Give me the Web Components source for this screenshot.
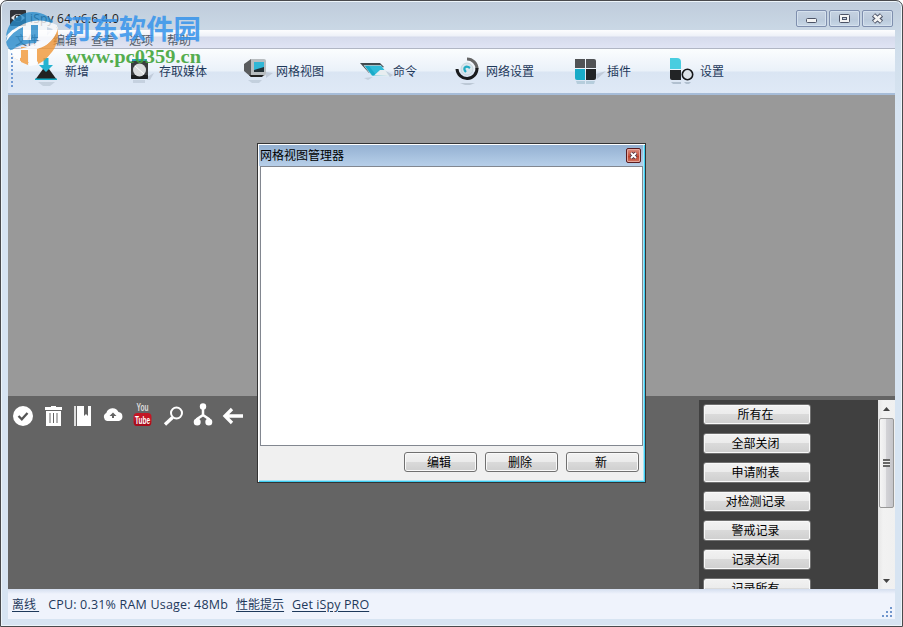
<!DOCTYPE html>
<html lang="zh-CN"><head><meta charset="utf-8"><title>iSpy 64 v6.6.4.0</title>
<style>html,body{margin:0;width:903px;height:627px;overflow:hidden;background:#fff;font:12px/16px "Noto Sans CJK SC",sans-serif}</style></head><body>
<ispy-window></ispy-window>
<script>
const icons={
add:'<path d="M8 25L16 14H22L30 25Z" fill="#222"/><path d="M8 23.500h22v1.600H8z" fill="#14a9c4"/><path d="M16.500 3h5v7h4.500l-7 7-7-7h4.500z" fill="#25b3d0"/><path d="M11 27h17l-5 4h-7z" fill="#8c9aa8" opacity=".3"/>',
media:'<path d="M26 22l7-4-4 7h-3z" fill="#9aa6b4" opacity=".4"/><rect x="11" y="4" width="15" height="6" fill="#28a5bd"/><rect x="10" y="6" width="17" height="18" rx="1.500" fill="#3a3c3e"/><rect x="10" y="20" width="17" height="4" rx="1" fill="#1b1d1f"/><circle cx="18.500" cy="15" r="6.500" fill="#dadcde"/><path d="M14 11l9 8" stroke="#fff"/><path d="M12 25h12v3H12z" fill="#8c9aa8" opacity=".28"/>',
grid:'<path d="M28 17l7 1-7 5z" fill="#9aa6b4" opacity=".4"/><path d="M6 9l7-5h6v18h-6l-7-6z" fill="#5a5c5e"/><path d="M13 4h13a2 2 0 012 2v12a3 3 0 01-3 3H13z" fill="#b8bdc0"/><path d="M11 20h15l-2 2H13z" fill="#222"/><path d="M16 7h10v10H16z" fill="#243137"/><path d="M16 7h10v5l-10 3z" fill="#30b7d6"/><path d="M10 25h14l-3 3h-7z" fill="#8c9aa8" opacity=".3"/>',
cmd:'<path d="M29 15l9 5-3 2z" fill="#9aa6b4" opacity=".4"/><path d="M5 8h20l4 4-15 6z" fill="#414a4e"/><path d="M9 10.500h17l8 10.500H17z" fill="#1aabc9" stroke="#e6f2f6" stroke-width=".6"/><path d="M14 11h12l4 5-9 4z" fill="#2fbbd8"/><path d="M19 20.500l6-5.500h5l4 6z" fill="#e7edf0"/><path d="M9 23l9-1-5 3z" fill="#8c9aa8" opacity=".3"/>',
net:'<path d="M19 4a10 10 0 0110 10" fill="none" stroke="#666" stroke-width="3"/><path d="M29 13a10 10 0 01-20 1" fill="none" stroke="#191b1d" stroke-width="3"/><circle cx="19" cy="14" r="6" fill="#d9e6ec" stroke="#c6d5dd"/><path d="M18 17c-4-4 0-7 4-4" fill="none" stroke="#24abc4" stroke-width="2.200"/><path d="M12 28h15l-5 2h-5z" fill="#8c9aa8" opacity=".4"/>',
plugin:'<path d="M27 19l10-3-9 8z" fill="#9aa6b4" opacity=".4"/><path d="M6 4h10v9H6z" fill="#515355"/><path d="M17 4h8a2 2 0 012 2v7H17z" fill="#515355"/><path d="M6 14h10v11H8a2 2 0 01-2-2z" fill="#19abc7"/><path d="M17 14h10v9a2 2 0 01-2 2h-8z" fill="#222426"/><path d="M7 26h9v3H8zM17 26h9l-1 3h-8z" fill="#6e9eb0" opacity=".35"/>',
settings:'<path d="M8 3h7a4 4 0 014 4v7H8z" fill="#48cde0"/><path d="M8 15h11v10H10a2 2 0 01-2-2z" fill="#222426"/><circle cx="25.500" cy="19.500" r="5.200" fill="#dce3e9" stroke="#151719" stroke-width="1.600"/><path d="M9 27h10v2h-8zM22 27h7l-2 2h-3z" fill="#718899" opacity=".4"/>',
check:'<circle cx="10" cy="10" r="10"/><path d="M5.500 10l3.300 3.300L14.500 7" fill="none" stroke="#555" stroke-width="2.300"/>',
trash:'<path d="M2 1h6V0h5v1h6v3H2z"/><path fill-rule="evenodd" d="M3 5h15v15H3zM6.500 7v10h1V7zm3.500 0v10h1V7zm3.500 0v10h1V7z"/>',
book:'<path d="M1 0h2v20H1z" fill="#ddd"/><path d="M4 0h7v10l2-2 2 2V0h3v20H4z"/>',
cloud:'<path fill-rule="evenodd" d="M4 15a4.300 4.300 0 01-.7-8A6.500 6.500 0 0115.500 6 4.600 4.600 0 0116 15zM10 6.500L6.500 10H9v2h2v-2h2.500z"/>',
find:'<circle cx="13.500" cy="7" r="5.500" fill="none" stroke="#fff" stroke-width="2"/><path d="M9.500 11.500l-7.500 7" stroke="#fff" stroke-width="3.300"/>',
tree:'<circle cx="10" cy="0.500" r="3.200"/><circle cx="4.200" cy="16" r="3.500"/><circle cx="15.800" cy="16" r="3.500"/><path d="M10 2v7L4.200 13v3M10 9l5.800 4v3" fill="none" stroke="#fff" stroke-width="2.500"/>',
back:'<path d="M20 10H3M9 3l-7 7 7 7" fill="none" stroke="#fff" stroke-width="3.300"/>',
tube:'<text x="9.500" y="5" text-anchor="middle" font-family="Liberation Sans" font-weight="bold" font-size="10.500" textLength="12" lengthAdjust="spacingAndGlyphs" fill="#ddd">You</text><rect x=".5" y="7" width="18" height="13" rx="4" fill="#c31725"/><rect x="1" y="14" width="17" height="6" rx="3" fill="#a80d1b"/><text x="9.500" y="17.500" text-anchor="middle" font-family="Liberation Sans" font-weight="bold" font-size="11" textLength="15" lengthAdjust="spacingAndGlyphs" fill="#fff">Tube</text>'};
const def=(n,html)=>customElements.define(n,class extends HTMLElement{constructor(){super();this.attachShadow({mode:'open'}).innerHTML=typeof html==='function'?html(this):html}});
def('ui-icon',e=>`<style>:host{display:block;flex:none;width:var(--icon-size,20px);height:var(--icon-size,20px)}svg{display:block;width:100%;height:100%;overflow:visible}</style><svg viewBox="0 0 ${e.getAttribute('size')||20} ${e.getAttribute('size')||20}" fill="#fff">${icons[e.getAttribute('name')]}</svg>`);
def('tool-item',e=>`<style>:host{display:flex;flex:none;align-items:center;gap:6px;color:#1e395b;white-space:nowrap;--icon-size:32px}</style><ui-icon size="32" name="${e.getAttribute('icon')}"></ui-icon><span><slot></slot></span>`);
def('ui-button',`<style>:host{display:flex;box-sizing:border-box;flex:none;align-items:center;justify-content:center;height:20px;border:1px solid #707070;border-radius:3px;background:linear-gradient(#f2f2f2,#ebebeb 49%,#dadada 50%,#cfcfcf);box-shadow:inset 0 0 0 1px #f9f9f9;color:#000;white-space:nowrap;line-height:16px;padding:0 3px var(--lift,2px) 0}</style><slot></slot>`);
def('caption-button',e=>`<style>:host{display:block;box-sizing:border-box;width:31px;height:17px;border:1px solid #7f8fae;border-radius:2px;box-shadow:inset 0 0 0 1px #d5e1ee;background:linear-gradient(#c5d2e1,#bdcbdc 50%,#b8c8da 51%,#c8d7e6)}svg{display:block}</style><svg width="29" height="15">${{min:'<rect x="9.500" y="7.500" width="10" height="4" rx="1" fill="#f4f4f4" stroke="#4c5366"/>',max:'<rect x="9.500" y="3.500" width="10" height="8" rx="1" fill="#f4f4f4" stroke="#4c5366"/><rect x="12.500" y="6.500" width="4" height="2" fill="#c6d2e2" stroke="#4c5366"/>',close:'<path d="M10.500 4l8 7m0-7l-8 7" stroke="#4c5366" stroke-width="4.800"/><path d="M11 4.300l7 6.400m0-6.400l-7 6.400" stroke="#f4f4f4" stroke-width="2.600"/>'}[e.getAttribute('kind')]}</svg>`);
def('title-bar',`<style>:host{display:flex;height:30px;box-sizing:border-box;padding:10px 9px 0;justify-content:space-between;color:#222}.l,.r{display:flex;gap:2px}.l{gap:4px;align-items:center;height:16px}.l span{font:12px/16px "Open Sans",sans-serif;letter-spacing:.2px;padding-top:2px}</style><div class="l"><svg width="16" height="16"><rect width="16" height="16" rx="1" fill="#303338"/><path d="M1 8q7-8 14 0-7 7-14 0" fill="#e5e9ec"/><circle cx="8" cy="8" r="3.600" fill="#222"/><circle cx="7" cy="7" r="1.300" fill="#d7edf7"/></svg><span>iSpy 64 v6.6.4.0</span></div><div class="r"><caption-button kind="min"></caption-button><caption-button kind="max"></caption-button><caption-button kind="close"></caption-button></div>`);
def('menu-bar',`<style>:host{display:flex;box-sizing:border-box;height:19px;padding:1px 7px 0;gap:14px;background:linear-gradient(#fdfdfe,#eef1f8 6px,#d6dbec 7px,#e0e4f4);border-bottom:1px solid #b1b6c4;color:#555d68;line-height:18px}</style><span>文件</span><span>编辑</span><span>查看</span><span>选项</span><span>帮助</span>`);
def('tool-bar',`<style>:host{display:flex;align-items:center;box-sizing:border-box;height:46px;border-bottom:2px solid #a6bcd8;background:linear-gradient(#fbfdfe,#eaf1f9 22px,#dae5f3 23px,#dfe9f6);padding-left:3px}.g{width:2px;height:36px;margin-right:14px;background:repeating-linear-gradient(#6f9ad5 0 2px,transparent 2px 4px)}</style><div class="g"></div><tool-item icon="add" style="width:94px">新增</tool-item><tool-item icon="media" style="width:117px">存取媒体</tool-item><tool-item icon="grid" style="width:117px">网格视图</tool-item><tool-item icon="cmd" style="width:93px">命令</tool-item><tool-item icon="net" style="width:121px">网络设置</tool-item><tool-item icon="plugin" style="width:93px">插件</tool-item><tool-item icon="settings">设置</tool-item>`);
def('media-strip',`<style>:host{display:flex;flex:1;gap:10px;padding:10px 5px}</style>${['check','trash','book','cloud','tube','find','tree','back'].map(n=>`<ui-icon name="${n}"></ui-icon>`).join('')}`);
def('scroll-bar',`<style>:host{display:flex;flex-direction:column;align-items:center;width:17px;background:linear-gradient(90deg,#e6e6e6,#f2f2f2 30%,#f0f0f0)}.a{height:17px;display:flex;align-items:center}.t{box-sizing:border-box;width:15px;height:90px;margin-top:1px;border:1px solid #979797;border-radius:2px;background:linear-gradient(90deg,#f5f5f5,#e8e8ea 48%,#d2d2d6 50%,#c5c5ca);display:flex;align-items:center;justify-content:center}.t i{width:7px;height:8px;background:repeating-linear-gradient(#666 0 2px,#eee 2px 3px)}.s{flex:1}svg{display:block}</style><div class="a"><svg width="7" height="4"><path d="M0 4l3.500-4L7 4z" fill="#444"/></svg></div><div class="t"><i></i></div><div class="s"></div><div class="a"><svg width="7" height="4"><path d="M0 0h7L3.500 4z" fill="#444"/></svg></div>`);
def('command-panel',`<style>:host{display:flex;width:196px;margin-top:4px;height:189px;background:#404040;overflow:hidden}.b{display:flex;flex:1;flex-direction:column;gap:8px;padding:4px 4px 0}ui-button{width:108px;height:21px}</style><div class="b">${['所有在','全部关闭','申请附表','对检测记录','警戒记录','记录关闭','记录所有'].map(t=>`<ui-button>${t}</ui-button>`).join('')}</div><scroll-bar></scroll-bar>`);
def('status-bar',`<style>:host{display:flex;box-sizing:border-box;height:30px;padding:2px 3px 0 4px;align-items:center;background:linear-gradient(#d4deef,#eff3fc 5px);color:#1e395b;font:12.500px/16px "Open Sans","Noto Sans CJK SC",sans-serif;white-space:pre}u{text-underline-offset:1.500px}.c{margin:0 8px 0 9px;letter-spacing:.19px}.p{margin-left:8px;letter-spacing:.1px}.z{font-size:12px}svg{margin:0 0 2px auto;align-self:flex-end}</style><u class="z">离线 </u><span class="c">CPU: 0.31% RAM Usage: 48Mb</span><u class="z">性能提示</u><u class="p">Get iSpy PRO</u><svg width="10" height="10" fill="#6f95cc"><path d="M8 0h2v2H8zM4 4h2v2H4zM8 4h2v2H8zM0 8h2v2H0zM4 8h2v2H4zM8 8h2v2H8z"/></svg>`);
def('grid-dialog',`<style>:host{box-sizing:border-box;display:flex;flex-direction:column;border:1px solid #333;background:#f0f0f0;box-shadow:inset 1px 1px #fff,inset -1px -1px #3ecdf2,inset -2px -2px #a5e6f7;padding:1px 2px 2px}.t{height:21px;box-sizing:border-box;margin:0 0 0 -1px;padding:0 2px 1px 1px;display:flex;align-items:center;justify-content:space-between;background:linear-gradient(#94b1d2,#b7cfe9);color:#000}.t span{margin-top:-1px}.x{box-sizing:border-box;width:15px;height:15px;border:1px solid #5a1c20;border-radius:2px;box-shadow:inset 0 0 0 1px #e5a79c;background:linear-gradient(#d99185,#c9533f 50%,#b83a24 51%,#d17562)}.x svg{display:block}.c{flex:1;background:#fff;border:1px solid #828790}.f{height:34px;display:flex;justify-content:flex-end;gap:8px;padding:6px 4px 0;box-sizing:border-box}ui-button{width:73px;--lift:0px}</style><div class="t"><span>网格视图管理器</span><div class="x"><svg width="13" height="13"><path d="M4 4l5 5m0-5L4 9" stroke="#4c3340" stroke-width="3.600"/><path d="M4 4l5 5m0-5L4 9" stroke="#fff" stroke-width="1.900"/></svg></div></div><div class="c"></div><div class="f"><ui-button>编辑</ui-button><ui-button>删除</ui-button><ui-button>新</ui-button></div>`);
def('site-watermark',`<style>:host{display:block;pointer-events:none}svg{display:block}</style><svg width="210" height="75"><g opacity=".78"><path d="M6 36A27 27 0 0153 21L51 26Q23 17 6 36" fill="#278ccc"/><path d="M6 38Q27 20 42 24L36 43Q20 43 11 51Q5 45 6 38" fill="#278ccc"/><path d="M18 27Q36 15 57 25L58 32Q54 29 47 27V40H38V25H31V40H23V27Q13 31 6 42Q6 34 18 27" fill="#fff"/><path d="M57 27A28 28 0 0112 56L21 58V47H28V62L33 63V47Q49 43 57 27" fill="#f29531"/><path d="M10 50Q36 49 53 29L58 27Q55 44 37 49V65L29 66V50H20V61L14 58Z" fill="#fff"/><path d="M21 51h7v14l-7-3zM38 50q10-4 17-14-1 21-17 28z" fill="#f29531"/></g><text x="64" y="39" font-family="Noto Sans CJK SC" font-size="27" font-weight="700" textLength="137" lengthAdjust="spacingAndGlyphs" fill="#3794eb" opacity=".86">河东软件园</text><text x="66" y="63" font-family="Liberation Serif" font-size="19" font-weight="700" textLength="135" lengthAdjust="spacingAndGlyphs" fill="#43a53b" opacity=".9">www.pc0359.cn</text></svg>`);
def('ispy-window',`<style>:host{display:flex;flex-direction:column;position:relative;box-sizing:border-box;width:903px;height:627px;border:1px solid #494a4d;border-radius:7px 7px 0 0;padding:0 7px;background:linear-gradient(#bfccdb,#d0deeb 45px,#d7e4f2 110px);box-shadow:inset 0 0 0 1px #edf5fa;overflow:hidden}title-bar{margin:-1px -7px 0;flex:none}menu-bar,tool-bar,status-bar{flex:none}.v{height:301px;background:#999}.m{height:193px;background:#646464;display:flex}grid-dialog{position:absolute;left:256px;top:142px;width:389px;height:340px}site-watermark{position:absolute;left:-1px;top:-1px}</style><title-bar></title-bar><menu-bar></menu-bar><tool-bar></tool-bar><div class="v"></div><div class="m"><media-strip></media-strip><command-panel></command-panel></div><status-bar></status-bar><grid-dialog></grid-dialog><site-watermark></site-watermark>`);
</script></body></html>
